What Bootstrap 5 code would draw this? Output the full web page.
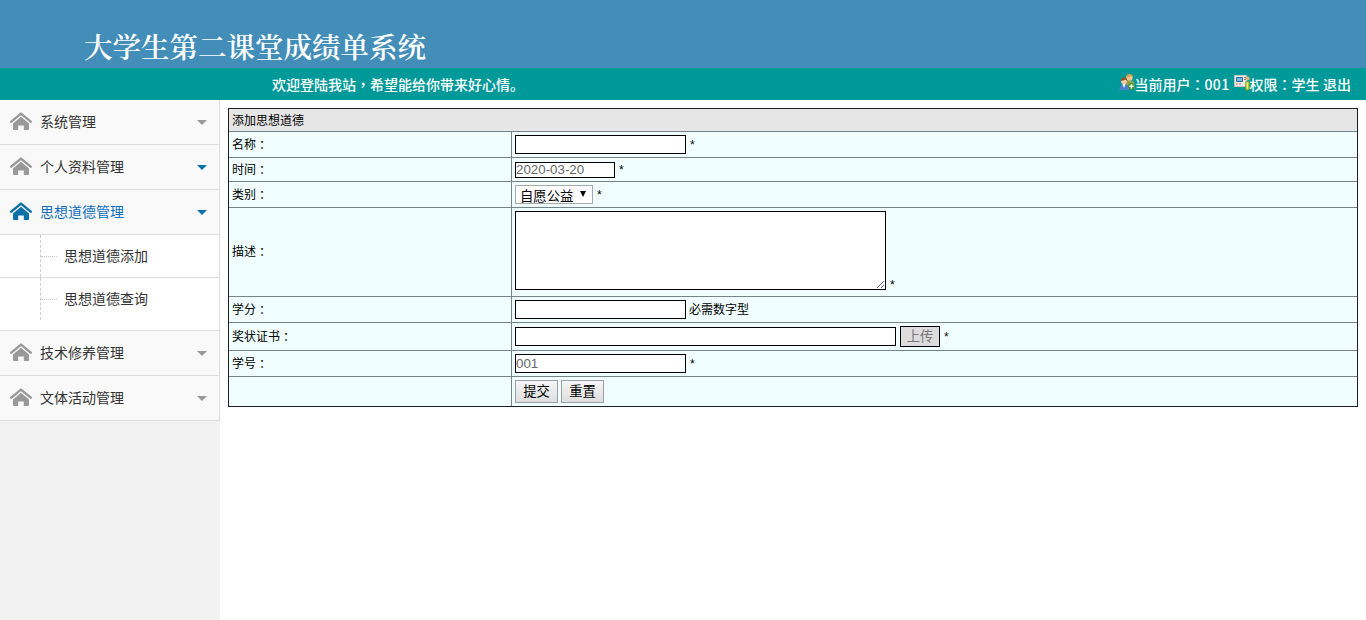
<!DOCTYPE html>
<html lang="zh-CN">
<head>
<meta charset="utf-8">
<meta name="viewport" content="width=device-width, initial-scale=1">
<title>大学生第二课堂成绩单系统</title>
<link href="https://cdn.jsdelivr.net/npm/bootstrap@5.3.0/dist/css/bootstrap.min.css" rel="stylesheet">
<style>
body{font:12px/18px "Liberation Sans","Noto Sans CJK SC",sans-serif;color:#000;overflow:hidden}
.cc{font-family:"Noto Sans CJK TC",sans-serif}
.banner{height:68px;background:#438eb9;padding:0 0 0 84px}
.banner h1{font:600 28.5px/40px "Noto Serif CJK SC","Noto Sans CJK SC",serif;color:#fff;margin:0;padding-top:26px;white-space:nowrap}
.welcome{height:32px;background:#009999;color:#fff;font:500 14px/32px "Noto Sans CJK SC",sans-serif;padding:0 15px 0 272px}
.welcome svg{display:block;margin-top:6px}
.num{letter-spacing:.35px}
.side{width:220px;background:#f2f2f2;font:14px/20px "Noto Sans CJK SC",sans-serif;flex:none;height:520px}
.side-in{border-right:1px solid #ddd}
.item{height:45px;background:#f9f9f9;border-bottom:1px solid #ddd;padding:0 12px 2px 10px;color:#333}
.item svg.home{color:#999;margin-right:8px;margin-top:-1px}
.item.on{color:#0b6cbc}
.item.on svg.home{color:#0b6fa8}
.item .tri{width:10px;height:5px;color:#999;margin-left:auto;margin-top:2px}
.item .tri.blue{color:#0b6fa8}
.sub{background:#fff;height:96px;border-bottom:1px solid #ddd}
.sub-row{height:43px;padding-left:40px;color:#333}
.sub-row + .sub-row{height:42px}
.sub-row:first-child{border-bottom:1px solid #ddd}
.sub-row b{font-weight:400;padding-bottom:2px}
.tree{width:17px;height:100%;border-left:1px dashed #ccc;margin-right:7px}
.tree i{display:block;height:22px;border-bottom:1px dotted #ccc}
.main{padding:8px 8px 0}
.frm{border:1px solid #1b1f22;background:#f0feff;width:1130px}
.r{border-bottom:1px solid #75838a;display:flex;align-items:stretch}
.r:last-child{border-bottom:0}
.r .lb{width:283px;border-right:1px solid #75838a;padding-left:3px;display:flex;align-items:center;flex:none}
.r .vl{padding-left:3px;display:flex;align-items:center;gap:4px}
.hd{height:23px;background:#e6e6e6;padding-left:3px;line-height:24px}
.frm input{border:1px solid #000;background:#fff;height:19px;width:171px;padding:0;font:13.33px/16px "Liberation Sans",sans-serif;color:#666;border-radius:0;outline:0}
.frm textarea{width:371px;height:79px;border:1px solid #000;background:#fff;resize:both;display:block;border-radius:0}
.desc{padding-bottom:6px}
.desc span{line-height:10px}
.sel{width:78px;height:19px;background:#fff;border:1px solid #a9a9a9;font-size:13.33px;line-height:21px;padding-left:4px;display:flex}
.sel svg{margin:5px 0 0 7px}
.fb{border:1px solid #9a9fa3;background:linear-gradient(#f6f6f6,#dedede);width:43px;height:23px;font-size:13.33px;line-height:22px;padding:0;color:#000;border-radius:0}
.fb.up{border-color:#000;background:#ddd;color:#777;width:40px;height:21px;line-height:20px}
</style>
</head>
<body>
<svg class="d-none">
<symbol id="home" viewBox="0 0 22 18"><path d="M1.300 9.600 11 1.600l9.700 8" fill="none" stroke="currentColor" stroke-width="2.500" stroke-linecap="round" stroke-linejoin="round"/><path d="M11 4.800 19 11.400v5.600q0 1-1 1h-4.200v-4.500H8.200V18H4q-1 0-1-1v-5.600z" fill="currentColor"/></symbol>
<symbol id="tri" viewBox="0 0 10 5"><path d="M0 0h10L5 5z" fill="currentColor"/></symbol>
</svg>
<header class="banner"><h1>大学生第二课堂成绩单系统</h1></header>
<div class="welcome d-flex justify-content-between">
 <span>欢迎登陆我站<span class="cc" lang="zh-TW">，</span>希望能给你带来好心情。</span>
 <div class="d-flex">
  <svg width="16" height="17" viewBox="0 0 16 17"><path d="M6.500 9q0-3 4-3t5 3v6h-9z" fill="#8aa64c"/><circle cx="10.500" cy="3.500" r="3.200" fill="#f3c48c"/><path d="M7.300 3.500Q7 .3 10.500.3t3.300 3L12 2z" fill="#d99a45"/><path d="M.3 16q0-6 4.700-6t5 6z" fill="#4c7fd0"/><path d="m3.500 10 1.500 4 1.500-4z" fill="#fff"/><circle cx="5" cy="7.300" r="3" fill="#f6c9a0"/><path d="M1.800 7Q2 3.600 5 3.600T8.200 7L6.500 5.700z" fill="#9b4e2a"/><circle cx="12.500" cy="12.300" r="3.400" fill="#4c9238"/><path d="M12.500 10.200v4.200M10.400 12.300h4.200" stroke="#fff" stroke-width="1.400"/></svg>
  <span>当前用户<span class="cc" lang="zh-TW">：</span><span class="num">001</span></span>
  <svg width="16" height="17" viewBox="0 0 16 17" style="margin-left:4px"><path d="M.5 1.500h12v11H.5z" fill="#ececec" stroke="#c5c5c5"/><path d="M2.500 3.500h6v4h-6z" fill="#70bce8" stroke="#366a91"/><path d="M2 10h2m1 0h2" stroke="#d56952"/><path d="M10 3.500h2M10 5.500h2" stroke="#777"/><circle cx="13.600" cy="4.500" r="2.100" fill="#e8b37c"/><path d="M11.600 7.500h3.800v7.500l-1.700 1.500-2.100-1z" fill="#b7cc2f" stroke="#698b20" stroke-width=".6"/><path d="M13.300 8.500v6" stroke="#fff8ae"/></svg>
  <span>权限<span class="cc" lang="zh-TW">：</span>学生<span class="num">&nbsp;</span>退出</span>
 </div>
</div>
<div class="d-flex">
 <nav class="side"><div class="side-in">
  <div class="item d-flex align-items-center"><svg class="home" width="22" height="18"><use href="#home"/></svg>系统管理<svg class="tri"><use href="#tri"/></svg></div>
  <div class="item d-flex align-items-center"><svg class="home" width="22" height="18"><use href="#home"/></svg>个人资料管理<svg class="tri blue"><use href="#tri"/></svg></div>
  <div class="item on d-flex align-items-center"><svg class="home" width="22" height="18"><use href="#home"/></svg>思想道德管理<svg class="tri blue"><use href="#tri"/></svg></div>
  <div class="sub">
   <div class="sub-row d-flex align-items-center"><span class="tree"><i></i></span><b>思想道德添加</b></div>
   <div class="sub-row d-flex align-items-center"><span class="tree"><i></i></span><b>思想道德查询</b></div>
  </div>
  <div class="item d-flex align-items-center"><svg class="home" width="22" height="18"><use href="#home"/></svg>技术修养管理<svg class="tri"><use href="#tri"/></svg></div>
  <div class="item d-flex align-items-center"><svg class="home" width="22" height="18"><use href="#home"/></svg>文体活动管理<svg class="tri"><use href="#tri"/></svg></div>
 </div></nav>
 <main class="main">
  <div class="frm">
   <div class="r hd">添加思想道德</div>
   <div class="r" style="height:26px"><div class="lb">名称<span class="cc" lang="zh-TW">：</span></div><div class="vl"><input type="text" aria-label="名称">*</div></div>
   <div class="r" style="height:24px"><div class="lb">时间<span class="cc" lang="zh-TW">：</span></div><div class="vl"><input type="text" value="2020-03-20" style="width:100px;height:16px">*</div></div>
   <div class="r" style="height:26px"><div class="lb">类别<span class="cc" lang="zh-TW">：</span></div><div class="vl"><div class="sel">自愿公益<svg width="6" height="7" viewBox="0 0 6 7"><path d="M0 0h6L3 6z"/></svg></div>*</div></div>
   <div class="r" style="height:89px"><div class="lb">描述<span class="cc" lang="zh-TW">：</span></div><div class="vl desc align-items-end"><textarea aria-label="描述"></textarea><span>*</span></div></div>
   <div class="r" style="height:26px"><div class="lb">学分<span class="cc" lang="zh-TW">：</span></div><div class="vl" style="gap:3px"><input type="text" aria-label="学分">必需数字型</div></div>
   <div class="r" style="height:28px"><div class="lb">奖状证书<span class="cc" lang="zh-TW">：</span></div><div class="vl"><input type="text" style="width:381px" aria-label="奖状证书"><button class="fb up">上传</button>*</div></div>
   <div class="r" style="height:26px"><div class="lb">学号<span class="cc" lang="zh-TW">：</span></div><div class="vl"><input type="text" value="001">*</div></div>
   <div class="r" style="height:29px"><div class="lb"></div><div class="vl" style="gap:3px"><button class="fb">提交</button><button class="fb">重置</button></div></div>
  </div>
 </main>
</div>
<script src="https://cdn.jsdelivr.net/npm/bootstrap@5.3.0/dist/js/bootstrap.bundle.min.js"></script>
</body>
</html>
